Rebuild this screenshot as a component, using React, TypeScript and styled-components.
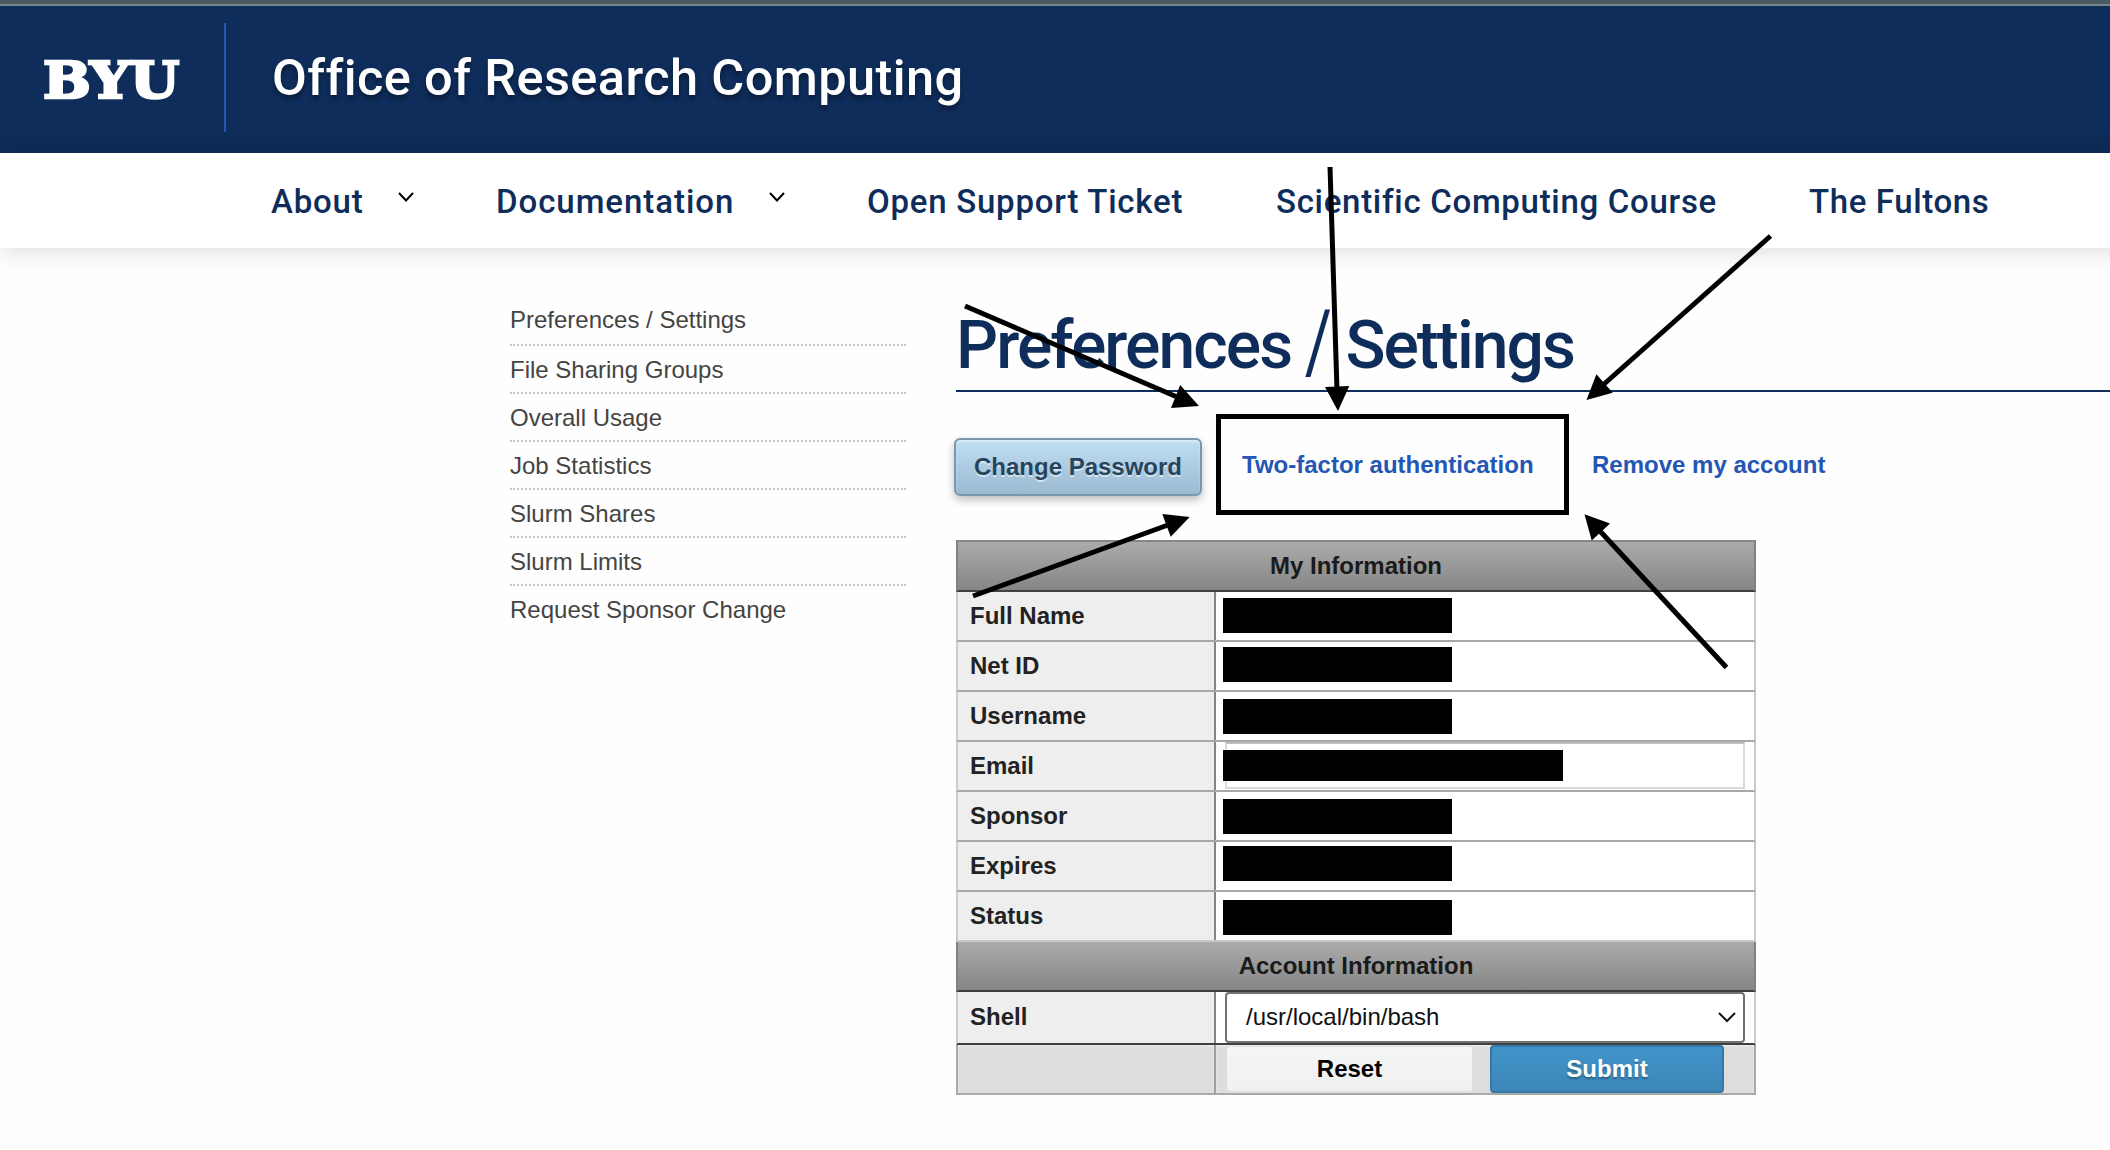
import React from "react";
import styled, { createGlobalStyle } from "styled-components";

const navy = "#0f2d5b";
const sans = '"Liberation Sans", Arial, Helvetica, sans-serif';
const display = 'Roboto, "Liberation Sans", sans-serif';

const GlobalStyle = createGlobalStyle`
  * { box-sizing: border-box; }
  html, body { margin: 0; padding: 0; background: #fff; overflow: hidden; }
  body { font-family: ${sans}; font-size: 24px; color: #222; }
`;

const Page = styled.div`
  position: relative;
  width: 2110px;
  height: 1150px;
  overflow: hidden;
  background: #fefefe;
`;

const BrowserEdge = styled.div`
  height: 6px;
  background: #4a5862;
  border-bottom: 2px solid #73838a;
`;

const Header = styled.header`
  display: flex;
  align-items: flex-start;
  height: 147px;
  background: linear-gradient(${navy} 86%, #0e2a55);
`;

const Logo = styled.div`
  flex: none;
  width: 224px;
  padding: 45px 0 0 43px;
  color: #fff;
  font: 700 50px/60px "DejaVu Serif", serif;
  -webkit-text-stroke: 2.6px #fff;
`;

const LogoText = styled.span`
  display: inline-block;
  letter-spacing: 0;
  transform: scaleX(1.13);
  transform-origin: left;
`;

const Divider = styled.div`
  width: 2px;
  height: 109px;
  margin-top: 17px;
  background: #2457b3;
`;

const SiteTitle = styled.div`
  margin: 42px 0 0 46px;
  color: #fff;
  font: 500 50.5px/60px ${display};
  letter-spacing: 0.4px;
  white-space: nowrap;
  text-shadow: 0 4px 5px rgba(0, 0, 0, 0.4);
`;

const Nav = styled.nav`
  display: flex;
  height: 95px;
  margin-right: -40px;
  padding-left: 271px;
  background: #fff;
  box-shadow: 0 4px 22px rgba(0, 0, 0, 0.13);
`;

const NavItem = styled.div<{ $width: number; $spacing: number }>`
  display: flex;
  flex: none;
  justify-content: space-between;
  width: ${(p) => p.$width}px;
  padding-top: 29px;
  color: ${navy};
  font: 500 33px/40px ${display};
  letter-spacing: ${(p) => p.$spacing}px;
  white-space: nowrap;
`;

const NavChevron = styled.svg`
  width: 16px;
  height: 10px;
  margin: 10px 82px 0 0;
  fill: none;
  stroke: #000;
  stroke-width: 2;
`;

const Main = styled.main`
  display: flex;
  align-items: flex-start;
  padding-left: 510px;
`;

const Sidebar = styled.aside`
  width: 396px;
  margin-top: 48px;
`;

const SideLink = styled.div`
  height: 48px;
  color: #444;
  font-size: 24px;
  line-height: 48px;
  & + & {
    border-top: 2px dotted #c6c6c6;
  }
`;

const Content = styled.section`
  flex: 1;
  margin-left: 50px;
`;

const Heading = styled.h1`
  height: 144px;
  margin: 0;
  padding: 59px 0 0;
  border-bottom: 2px solid ${navy};
  color: ${navy};
  font: 500 66px/78px ${display};
  letter-spacing: -1.95px;
  white-space: nowrap;
`;

const Slash = styled.span`
  display: inline-block;
  font-weight: 400;
  transform: translate(-1px, -3px) scaleY(1.32);
`;

const Actions = styled.div`
  display: flex;
  align-items: center;
  height: 101px;
  margin: 22px 0 25px -2px;
`;

const PasswordButton = styled.button`
  width: 248px;
  height: 58px;
  margin: 5px 14px 0 0;
  padding: 0;
  border: 2px solid #7898ae;
  border-radius: 6px;
  background: linear-gradient(#c0dff3, #9bbad2);
  box-shadow: 0 4px 8px rgba(0, 0, 0, 0.25), inset 0 2px 2px rgba(255, 255, 255, 0.4);
  color: #26445b;
  font: 700 24px/50px ${sans};
  text-shadow: 0 2px 0 rgba(255, 255, 255, 0.5);
`;

const ActionLink = styled.a<{ $boxed?: boolean }>`
  display: flex;
  align-items: center;
  height: 101px;
  width: ${(p) => (p.$boxed ? "353px" : "auto")};
  padding-left: ${(p) => (p.$boxed ? "21px" : "23px")};
  border: ${(p) => (p.$boxed ? "5px solid #000" : "0")};
  color: #2356b5;
  font-weight: 700;
  white-space: nowrap;
`;

const Table = styled.div`
  width: 800px;
`;

const BandRow = styled.div<{ $first?: boolean }>`
  height: ${(p) => (p.$first ? 52 : 50)}px;
  border: 2px solid #808080;
  border-top: ${(p) => (p.$first ? "2px solid #868686" : "0")};
  border-bottom-color: #404040;
  background: linear-gradient(#ababab, #868686);
  color: #1a1a1a;
  font-weight: 700;
  line-height: 48px;
  text-align: center;
`;

const Row = styled.div<{ $height?: number; $line?: string }>`
  display: flex;
  height: ${(p) => p.$height ?? 50}px;
  border: 2px solid #ccc;
  border-top: 0;
  border-bottom-color: ${(p) => p.$line ?? "#a8a8a8"};
  line-height: ${(p) => (p.$height ? 50 : 48)}px;
`;

const Label = styled.div`
  flex: none;
  width: 258px;
  padding-left: 12px;
  border-right: 2px solid #858585;
  background: #eee;
  color: #222;
  font-weight: 700;
`;

const Value = styled.div`
  flex: 1;
  padding-left: 7px;
  background: #fff;
`;

const Redaction = styled.div<{ $top: number; $wide?: boolean }>`
  width: ${(p) => (p.$wide ? 340 : 229)}px;
  height: ${(p) => (p.$wide ? 31 : 35)}px;
  margin-top: ${(p) => p.$top}px;
  margin-left: ${(p) => (p.$wide ? -4 : 0)}px;
  background: #000;
`;

const EmailField = styled.div`
  display: flex;
  width: 520px;
  height: 47px;
  margin-left: 2px;
  border: 2px solid #dadada;
  border-top-color: #bdbdbd;
`;

const ShellSelect = styled.div`
  display: flex;
  align-items: center;
  justify-content: space-between;
  width: 520px;
  height: 51px;
  margin-left: 2px;
  padding: 0 7px 2px 19px;
  border: 2px solid #727272;
  border-radius: 4px;
  color: #111;
`;

const SelectChevron = styled.svg`
  width: 18px;
  height: 12px;
  fill: none;
  stroke: #111;
  stroke-width: 2;
`;

const FooterRow = styled.div`
  display: flex;
  height: 50px;
  border: 2px solid #a8a8a8;
  border-top: 0;
  background: #ddd;
`;

const FooterCell = styled.div<{ $blank?: boolean }>`
  display: flex;
  width: ${(p) => (p.$blank ? "258px" : "538px")};
  padding-left: ${(p) => (p.$blank ? 0 : 11)}px;
  border-right: ${(p) => (p.$blank ? "2px solid #a0a0a0" : "0")};
  box-shadow: inset 0 1px 3px #eee;
`;

const ResetButton = styled.button`
  width: 245px;
  height: 44px;
  margin: 2px 18px 0 0;
  padding: 0;
  border: 0;
  border-radius: 3px;
  background: linear-gradient(#f5f5f5, #f0f0f0);
  color: #000;
  font: 700 24px/44px ${sans};
`;

const SubmitButton = styled.button`
  width: 234px;
  height: 48px;
  padding: 0;
  border: 2px solid #3577a5;
  border-radius: 4px;
  background: linear-gradient(#4294ca, #3c86b8);
  color: #fff;
  font: 700 24px/44px ${sans};
  text-shadow: 0 2px 2px rgba(0, 0, 0, 0.3);
`;

const Annotations = styled.svg`
  position: absolute;
  inset: 0;
  width: 2110px;
  height: 1150px;
  pointer-events: none;
`;

const navItems = [
  { label: "About", width: 225, spacing: 0.8, menu: true },
  { label: "Documentation", width: 371, spacing: 0.95, menu: true },
  { label: "Open Support Ticket", width: 409, spacing: 0.75 },
  { label: "Scientific Computing Course", width: 533, spacing: 0.7 },
  { label: "The Fultons", width: 180, spacing: 0.62 },
];

const sideLinks = [
  "Preferences / Settings",
  "File Sharing Groups",
  "Overall Usage",
  "Job Statistics",
  "Slurm Shares",
  "Slurm Limits",
  "Request Sponsor Change",
];

const infoRows = [
  { label: "Full Name", top: 6 },
  { label: "Net ID", top: 5 },
  { label: "Username", top: 7 },
  { label: "Email", top: 6, field: true },
  { label: "Sponsor", top: 7 },
  { label: "Expires", top: 4 },
  { label: "Status", top: 8, line: "#c8c8c8" },
];

const arrows = [
  { from: [965, 306], to: [1176, 396.5], head: "1199,406 1180.2,385 1171,408" },
  { from: [1330, 167], to: [1337, 390], head: "1338,411 1325,387 1349.3,386" },
  { from: [1770.5, 236], to: [1603, 385], head: "1586.5,400 1596.4,374.3 1612.7,392.7" },
  { from: [973, 596], to: [1168, 525], head: "1189.7,517 1162.3,514 1170.7,536.8" },
  { from: [1726.5, 667.5], to: [1599, 530], head: "1584.5,514.3 1591.7,540.5 1610,523.5" },
];

export default function App() {
  return (
    <Page>
      <GlobalStyle />
      <BrowserEdge />
      <Header>
        <Logo>
          <LogoText>BYU</LogoText>
        </Logo>
        <Divider />
        <SiteTitle>Office of Research Computing</SiteTitle>
      </Header>
      <Nav>
        {navItems.map((item) => (
          <NavItem key={item.label} $width={item.width} $spacing={item.spacing}>
            {item.label}
            {item.menu && (
              <NavChevron viewBox="0 0 16 10">
                <path d="M1 1 L8 8.5 L15 1" />
              </NavChevron>
            )}
          </NavItem>
        ))}
      </Nav>
      <Main>
        <Sidebar>
          {sideLinks.map((label) => (
            <SideLink key={label}>{label}</SideLink>
          ))}
        </Sidebar>
        <Content>
          <Heading>
            Preferences <Slash>/</Slash> Settings
          </Heading>
          <Actions>
            <PasswordButton>Change Password</PasswordButton>
            <ActionLink $boxed>Two-factor authentication</ActionLink>
            <ActionLink>Remove my account</ActionLink>
          </Actions>
          <Table>
            <BandRow $first>My Information</BandRow>
            {infoRows.map((row) => (
              <Row key={row.label} $line={row.line}>
                <Label>{row.label}</Label>
                <Value>
                  {row.field ? (
                    <EmailField>
                      <Redaction $top={row.top} $wide />
                    </EmailField>
                  ) : (
                    <Redaction $top={row.top} />
                  )}
                </Value>
              </Row>
            ))}
            <BandRow>Account Information</BandRow>
            <Row $height={53} $line="#404040">
              <Label>Shell</Label>
              <Value>
                <ShellSelect>
                  /usr/local/bin/bash
                  <SelectChevron viewBox="0 0 18 12">
                    <path d="M1 2 L9 10 L17 2" />
                  </SelectChevron>
                </ShellSelect>
              </Value>
            </Row>
            <FooterRow>
              <FooterCell $blank />
              <FooterCell>
                <ResetButton>Reset</ResetButton>
                <SubmitButton>Submit</SubmitButton>
              </FooterCell>
            </FooterRow>
          </Table>
        </Content>
      </Main>
      <Annotations viewBox="0 0 2110 1150">
        {arrows.map((arrow) => (
          <g key={arrow.head}>
            <line
              x1={arrow.from[0]}
              y1={arrow.from[1]}
              x2={arrow.to[0]}
              y2={arrow.to[1]}
              stroke="#000"
              strokeWidth="5"
            />
            <polygon points={arrow.head} />
          </g>
        ))}
      </Annotations>
    </Page>
  );
}
